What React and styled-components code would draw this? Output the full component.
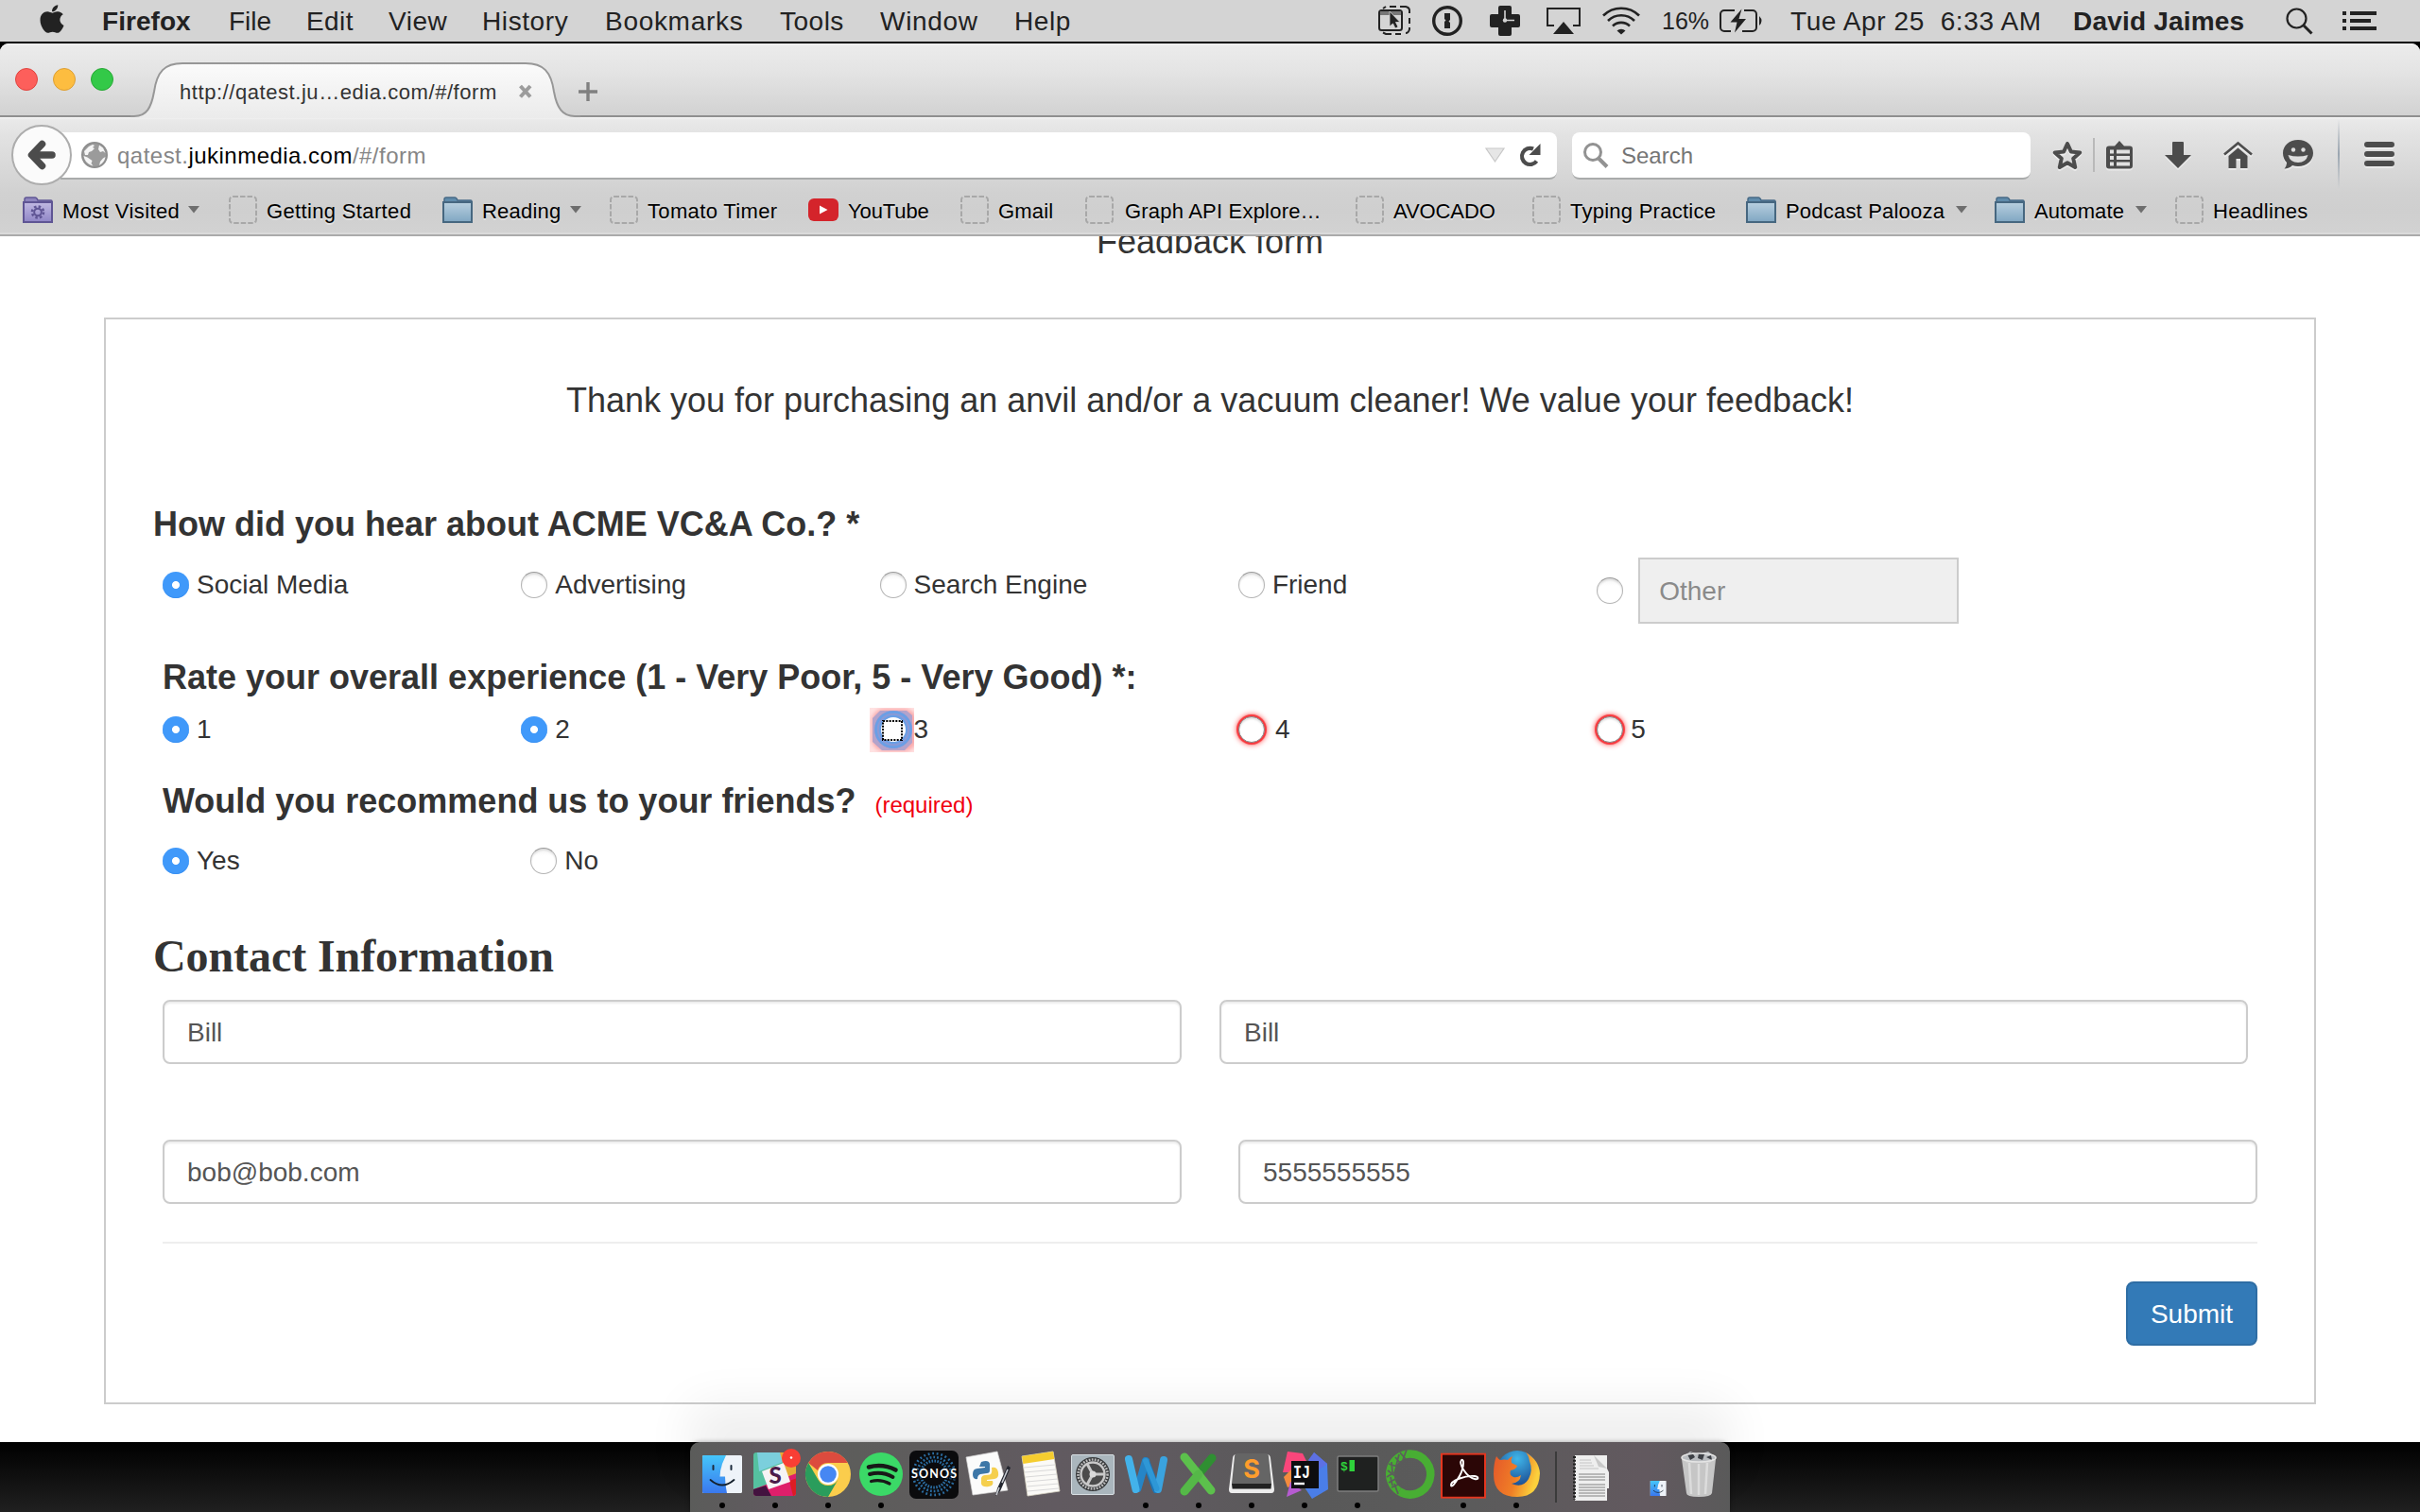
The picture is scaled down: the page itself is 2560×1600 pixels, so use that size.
import React from 'react';
import styled, { createGlobalStyle, css } from 'styled-components';
import { FaApple } from 'react-icons/fa';

const Global = createGlobalStyle`
  * { box-sizing: border-box; }
  html, body { margin: 0; padding: 0; background: #000; overflow: hidden; }
  body { font-family: "Liberation Sans", Arial, Helvetica, sans-serif; }
  h1, h2, h3, p { margin: 0; font-weight: normal; }
  svg { display: block; flex: none; overflow: visible; }
`;

const Desktop = styled.div`
  width: 2560px;
  height: 1600px;
  overflow: hidden;
  display: flex;
  flex-direction: column;
  background: linear-gradient(180deg, #000 0, #000 1526px, #060606 1540px, #202020 1600px);
`;

/* ---------- menu bar ---------- */

const MenuBar = styled.header`
  height: 44px;
  margin-bottom: 2px;
  flex: none;
  display: flex;
  align-items: center;
  background: #d4d4d4;
  color: #222;
  font-size: 28px;
  line-height: 44px;
  white-space: pre;
`;

const AppleSlot = styled.div`
  width: 108px;
  padding-left: 39px;
  svg { width: 32px; height: 34px; margin-top: -5px; }
`;

const MenuItem = styled.span`
  width: ${p => p.$w}px;
  flex: none;
  padding-top: ${p => (p.$size ? 0 : 1)}px;
  letter-spacing: ${p => p.$ls || 0}px;
  font-size: ${p => p.$size || 28}px;
  font-weight: ${p => (p.$bold ? 700 : 400)};
`;

const StatusSlot = styled.div`
  width: ${p => p.$w}px;
  flex: none;
`;

/* ---------- browser window ---------- */

const BrowserWindow = styled.div`
  height: 1480px;
  flex: none;
  display: flex;
  flex-direction: column;
  background: #fff;
  border-radius: 9px 9px 0 0;
  overflow: hidden;
`;

const TabStrip = styled.div`
  height: 78px;
  flex: none;
  display: flex;
  background: linear-gradient(180deg, #f2f2f2 0, #ebebeb 3px, #e4e4e4 30px, #d2d2d2 76px);
  border-bottom: 2px solid #8f8f8f;
`;

const Lights = styled.div`
  display: flex;
  gap: 16px;
  padding: 26px 0 0 16px;
  width: 138px;
`;

const Light = styled.i`
  width: 24px;
  height: 24px;
  border-radius: 50%;
  background: ${p => p.$fill};
  border: 1px solid ${p => p.$edge};
`;

const Tab = styled.div`
  position: relative;
  width: 476px;
  height: 78px;
  padding: 38px 0 0 52px;
  display: flex;
  align-items: flex-start;
  font-size: 22px;
  line-height: 26px;
  color: #333;
  > svg.shape { position: absolute; left: 0; top: 0; }
  > span, > svg.close { position: relative; }
`;

const TabTitle = styled.span`
  width: 358px;
  padding-top: 1px;
  white-space: nowrap;
  letter-spacing: 0.56px;
`;

const CloseSlot = styled.div`
  position: relative;
  margin-top: 5px;
`;

const NewTab = styled.div`
  margin: 41px 0 0 -2px;
`;

const Chrome = styled.div`
  height: 126px;
  flex: none;
  background: linear-gradient(180deg, #f4f4f4 0, #e9e9e9 3px, #e2e2e2 20px, #d1d1d1 80px, #cfcfcf 100px, #d2d2d2 122px);
  border-bottom: 2px solid #ababab;
  box-shadow: inset 0 -2px 0 #dadada;
`;

const NavRow = styled.div`
  height: 74px;
  display: flex;
  align-items: flex-start;
  padding: 8px 0 0 12px;
`;

const BackButton = styled.div`
  width: 64px;
  height: 64px;
  flex: none;
  border-radius: 50%;
  border: 2px solid #adadad;
  background: #fbfbfb;
  z-index: 1;
`;

const Field = styled.div`
  height: 50px;
  flex: none;
  margin-top: 8px;
  display: flex;
  align-items: center;
  background: #fff;
  border-bottom: 2px solid #a9abab;
  font-size: 24px;
`;

const UrlField = styled(Field)`
  width: 1583px;
  margin-left: -12px;
  padding-left: 22px;
  border-radius: 0 8px 8px 0;
`;

const SearchField = styled(Field)`
  width: 485px;
  margin-left: 16px;
  padding-left: 12px;
  gap: 13px;
  border-radius: 8px;
  color: #757575;
  > span { padding-top: 2px; }
`;

const Url = styled.span`
  width: 1447px;
  margin-left: 10px;
  padding-top: 2px;
  color: #868686;
  letter-spacing: 0.48px;
  b { font-weight: 400; color: #000; }
`;

const ReloadSlot = styled.div`
  margin-left: 15px;
`;

const NavIcon = styled.div`
  margin-left: ${p => p.$gap}px;
  margin-top: ${p => p.$top}px;
  flex: none;
  filter: drop-shadow(0 2px 0 rgba(255, 255, 255, 0.45));
`;

const Separator = styled.div`
  width: 2px;
  height: ${p => p.$h}px;
  margin-left: ${p => p.$gap}px;
  margin-top: ${p => p.$top}px;
  flex: none;
  background: ${p => p.$fill};
`;

const BookmarkBar = styled.nav`
  height: 48px;
  padding-left: 24px;
  display: flex;
  align-items: center;
`;

const Bookmark = styled.div`
  width: ${p => p.$w}px;
  flex: none;
  display: flex;
  align-items: center;
  font-size: 22px;
  color: #000;
  white-space: nowrap;
  text-shadow: 0 2px 0 rgba(255, 255, 255, 0.4);
`;

const BookmarkLabel = styled.span`
  margin: 4px 0 0 ${p => p.$gap}px;
  width: ${p => p.$w}px;
  letter-spacing: ${p => p.$ls}px;
`;

/* ---------- page ---------- */

const Page = styled.main`
  flex: 1;
  overflow: hidden;
  display: flex;
  flex-direction: column;
  align-items: center;
  color: #333;
`;

const PageTitle = styled.h1`
  font-size: 36px;
  line-height: 40px;
  margin: -14px 0 60px;
`;

const FormBox = styled.section`
  width: 2340px;
  height: 1150px;
  flex: none;
  border: 2px solid #ccc;
  padding: 61px 0 0 50px;
`;

const Thanks = styled.p`
  width: 2236px;
  font-size: 36px;
  line-height: 50px;
  text-align: center;
`;

const Question = styled.h2`
  display: flex;
  height: 40px;
  font-size: 36px;
  font-weight: 700;
  line-height: 40px;
  margin-top: ${p => p.$top}px;
  padding-left: ${p => (p.$inset ? 10 : 0)}px;
`;

const Required = styled.span`
  margin-left: 20px;
  padding-top: 4px;
  font-size: 24px;
  font-weight: 400;
  color: #f0000f;
`;

const Options = styled.div`
  display: grid;
  grid-template-columns: repeat(5, 379.3px);
  margin-top: ${p => p.$top}px;
  padding-left: 10px;
  height: ${p => p.$h || 28}px;
`;

const Option = styled.label`
  height: 28px;
  margin-top: ${p => p.$top || 0}px;
  margin-left: ${p => p.$shift || 0}px;
  display: flex;
  align-items: center;
  gap: ${p => p.$gap || 8}px;
  font-size: 28px;
  line-height: 28px;
`;

const radioStates = {
  off: css`
    background: linear-gradient(180deg, #f4f4f4, #fff 30%);
    border: 1.5px solid #b4b4b4;
    border-top-color: #999;
    box-shadow: inset 0 2px 2px rgba(0, 0, 0, 0.1);
  `,
  on: css`
    background: radial-gradient(circle at 50% 50%, #fff 0, #fff 3.6px, #4099fa 4.4px);
    box-shadow: inset 0 -1px 0 #3a90f2;
  `,
  invalid: css`
    background: #fff;
    border: 1.5px solid #888;
    box-shadow: 0 0 1px 2px #f7373c, 0 0 5px 3px rgba(255, 60, 60, 0.6), inset 0 2px 2px rgba(0, 0, 0, 0.12);
  `,
};

const Radio = styled.span`
  width: 28px;
  height: 28px;
  flex: none;
  border-radius: 50%;
  ${p => radioStates[p.$state]}
`;

const FocusSlot = styled.span`
  margin: 0 -8px 0 -11px;
  flex: none;
`;

const OtherWrap = styled.div`
  display: flex;
  align-items: center;
  gap: 16px;
`;

const OtherInput = styled.div`
  width: 339px;
  height: 70px;
  flex: none;
  border: 2px solid #ccc;
  background: #efefef;
  color: #8a8a8a;
  font-size: 28px;
  line-height: 67px;
  padding-left: 20px;
`;

const ContactTitle = styled.h2`
  margin-top: 62px;
  letter-spacing: -0.08px;
  font: 700 48px/50px "Liberation Serif", "Times New Roman", serif;
`;

const FieldRow = styled.div`
  display: flex;
  gap: ${p => p.$gap}px;
  margin-top: ${p => p.$top}px;
  padding-left: 10px;
`;

const TextInput = styled.div`
  width: ${p => p.$w || 1078}px;
  height: 68px;
  border: 2px solid #ccc;
  border-radius: 8px;
  box-shadow: inset 0 2px 2px rgba(0, 0, 0, 0.075);
  padding-left: 24px;
  font-size: 28px;
  line-height: 65px;
  color: #555;
`;

const Rule = styled.hr`
  width: 2216px;
  height: 2px;
  border: 0;
  margin: 40px 0 40px 10px;
  background: #eee;
`;

const Submit = styled.div`
  width: 139px;
  height: 68px;
  margin-left: 2087px;
  border: 2px solid #2e6da4;
  border-radius: 8px;
  background: #337ab7;
  color: #fff;
  font-size: 28px;
  line-height: 65px;
  text-align: center;
`;

/* ---------- dock ---------- */

const Dock = styled.footer`
  position: relative;
  width: 1100px;
  height: 74px;
  margin-left: 730px;
  padding-left: 6px;
  flex: none;
  display: flex;
  border-radius: 10px 10px 0 0;
  background: linear-gradient(90deg, #5b5c5a 0, #605a5f 8%, #5d5d5b 16%, #615a60 35%, #5f5a5f 46%, #595959 60%, #5b5b5b 75%, #62595f 92%, #5a5a5a);
  box-shadow: 0 -40px 50px rgba(0, 0, 0, 0.066), 0 0 5px rgba(0, 0, 0, 0.35);
`;

const DockItem = styled.div`
  width: ${p => p.$w || 56}px;
  flex: none;
  display: flex;
  flex-direction: column;
  align-items: center;
  padding-top: 4px;
`;

const RunningDot = styled.i`
  width: 6px;
  height: 6px;
  margin-right: 1px;
  border-radius: 50%;
  background: #000;
`;

const DockDivider = styled.div`
  width: 2px;
  height: 54px;
  margin: 10px 9px 0 13px;
  background: #3b3b3b;
`;

/* ---------- drawings ---------- */

const Ink = '#222';
const Tool = '#4c4c4c';

const CaptureIcon = () => (
  <svg width="36" height="32" fill="none" stroke={Ink} strokeWidth="2">
    <path d="M5 3l3-2M12 1h7M23 1h6q4 1 4 4v3M33 13v6M33 23v2q-1 4-4 4M24 30h-6M14 30H8l-3-1.500" />
    <rect x="1" y="5" width="24" height="21" rx="2.500" fill="#d4d4d4" />
    <path d="M2 8h22" stroke="#777" strokeWidth="4" />
    <path d="M12 6v16l3.500-3 2.500 5 3-1.500-2.500-5h4.500z" fill={Ink} stroke="#d4d4d4" strokeWidth=".8" />
  </svg>
);
const OnePassIcon = () => (
  <svg width="32" height="32">
    <circle cx="16" cy="16" r="14.300" fill="none" stroke={Ink} strokeWidth="3.400" />
    <path d="M13 8h6v7l-1.500 1.500 1.500 1.500v6h-6v-7l1.500-1.500L13 14z" fill={Ink} />
  </svg>
);
const CrossClockIcon = () => (
  <svg width="32" height="32">
    <path d="M11 0h10a2 2 0 0 1 2 2v7h7a2 2 0 0 1 2 2v10a2 2 0 0 1-2 2h-7v7a2 2 0 0 1-2 2H11a2 2 0 0 1-2-2v-7H2a2 2 0 0 1-2-2V11a2 2 0 0 1 2-2h7V2a2 2 0 0 1 2-2z" fill={Ink} />
    <path d="M16 5v10.500h10" fill="none" stroke="#d4d4d4" strokeWidth="1.600" />
    <circle cx="16" cy="15.500" r="2.200" fill="#d4d4d4" />
  </svg>
);
const AirplayIcon = () => (
  <svg width="36" height="28">
    <path d="M8 19H1V1h34v18h-7" fill="none" stroke={Ink} strokeWidth="2" />
    <path d="M18 15l11 13H7z" fill={Ink} />
  </svg>
);
const WifiIcon = () => (
  <svg width="40" height="30" fill="none" stroke={Ink} strokeWidth="2.600">
    <path d="M1 9.500a27 27 0 0 1 38 0M6 15a20 20 0 0 1 28 0M11 20.500a13 13 0 0 1 18 0" />
    <path d="M20 29.500l-4.500-4a6.500 6.500 0 0 1 9 0z" fill={Ink} stroke="none" />
  </svg>
);
const BatteryIcon = () => (
  <svg width="46" height="24">
    <path d="M16 1H5a4 4 0 0 0-4 4v14a4 4 0 0 0 4 4h7M26 1h9a4 4 0 0 1 4 4v14a4 4 0 0 1-4 4H24" fill="none" stroke={Ink} strokeWidth="2" />
    <path d="M42 7q5 5 0 10z" fill={Ink} />
    <path d="M23.500-.5L11.500 13.500h7l-2.500 11 12-14.500h-7.500z" fill={Ink} />
  </svg>
);
const SpotlightIcon = () => (
  <svg width="29" height="29" fill="none" stroke={Ink}>
    <circle cx="11.500" cy="11.500" r="10" strokeWidth="2.200" />
    <path d="M18.500 18.500l9 9" strokeWidth="3" />
  </svg>
);
const ListIcon = () => (
  <svg width="36" height="20" fill={Ink}>
    <path d="M0 0h4v4H0zM0 8h4v4H0zM0 16h4v4H0zM8 0h28v4H8zM8 8h22v4H8zM8 16h28v4H8z" />
  </svg>
);

const TabShape = () => (
  <svg className="shape" width="476" height="78">
    <defs>
      <linearGradient id="tabfill" x1="0" y1="0" x2="0" y2="1">
        <stop offset="0" stopColor="#fbfbfb" />
        <stop offset="1" stopColor="#ebebeb" />
      </linearGradient>
    </defs>
    <path d="M0 78L4 77C17 77 22 68 25 51C28 30 36 21 55 21H418C437 21 445 30 448 51C451 68 457 77 470 77L476 78V79H0z" fill="url(#tabfill)" />
    <path d="M0 77H4C17 77 22 68 25 51C28 30 36 21 55 21H418C437 21 445 30 448 51C451 68 457 77 470 77H476" fill="none" stroke="#979797" strokeWidth="2" />
  </svg>
);
const CloseIcon = () => (
  <svg width="16" height="16">
    <path d="M2.500 2l10.500 11.500M13 2L2.500 13.500" stroke="#9c9c9c" strokeWidth="4" />
  </svg>
);
const PlusIcon = () => (
  <svg width="20" height="20" stroke="#808080" strokeWidth="3.400">
    <path d="M10 0v20M0 10h20" />
  </svg>
);
const BackArrow = () => (
  <svg width="60" height="60">
    <path d="M30.500 18.500L19.500 30l11 11.500M21 30h20" fill="none" stroke={Tool} strokeWidth="7.500" strokeLinecap="round" strokeLinejoin="round" />
  </svg>
);
const Globe = () => (
  <svg width="28" height="28">
    <circle cx="14" cy="14" r="13" fill="#9b9b9b" stroke="#8f8f8f" strokeWidth="2" />
    <path d="M3 10l5-5 4-2 2 1-2 2 2 1-3 3-3 1-1 3-3 0zM2.500 15l4 1.500 5 3.500-1 3 2 2.500-2-.5Q3.500 22 2.500 15zM19 3.500l4 3 2.500 5.500-2.500-2-3 1-2-3zM25.500 16q-1 6-6.500 9l1-4 3-3.500z" fill="#f4f4f4" />
  </svg>
);
const DropTriangle = () => (
  <svg width="21" height="16">
    <path d="M1 1h19L10.500 15z" fill="#e6e6e6" stroke="#c8c8c8" strokeWidth="1.200" />
  </svg>
);
const ReloadIcon = () => (
  <svg width="23" height="24">
    <path d="M18.500 18.500A8.600 8.600 0 1 1 15 5.500" fill="none" stroke={Tool} strokeWidth="4.200" />
    <path d="M22.500 0v12h-12z" fill={Tool} />
  </svg>
);
const SearchIcon = () => (
  <svg width="27" height="28" fill="none" stroke="#929292">
    <circle cx="10" cy="11" r="8.500" strokeWidth="3" />
    <path d="M16 17.500l9 9" strokeWidth="4" />
  </svg>
);
const StarIcon = () => (
  <svg width="32" height="33">
    <path d="M16 4l3.800 8.400 9.400 1-7 6.300 2 9.300-8.200-4.800-8.200 4.800 2-9.300-7-6.300 9.400-1z" fill="none" stroke={Tool} strokeWidth="4" strokeLinejoin="round" />
  </svg>
);
const ClipboardIcon = () => (
  <svg width="28" height="30">
    <path d="M9 5.500L14 0l5 5.500h6a3 3 0 0 1 3 3v18a3 3 0 0 1-3 3H3a3 3 0 0 1-3-3v-18a3 3 0 0 1 3-3z" fill={Tool} />
    <path d="M11 11.500h14M11 18h14M11 24.500h14" stroke="#e0e0e0" strokeWidth="4" />
    <path d="M4 11.500h4M4 18h4M4 24.500h4" stroke="#e0e0e0" strokeWidth="4" />
  </svg>
);
const DownIcon = () => (
  <svg width="28" height="28">
    <path d="M9 0h10a1 1 0 0 1 1 1v13h8L14 28 0 14h8V1a1 1 0 0 1 1-1z" fill={Tool} />
  </svg>
);
const HomeIcon = () => (
  <svg width="31" height="28">
    <path d="M1 13.500L15.500 1.500 30 13.500" fill="none" stroke={Tool} strokeWidth="2.600" />
    <path d="M5.500 15L15.500 6.500 25.500 15v13h-7.500V18h-4.500v10h-8z" fill={Tool} />
  </svg>
);
const SmileIcon = () => (
  <svg width="32" height="31">
    <path d="M16 0c9 0 16 6 16 14s-7 14-16 14c-2 0-4-.3-6-1-2 2-5 3.500-8.500 3.500C3 29 4 26.500 4 24 1.500 21.500 0 18 0 14 0 6 7 0 16 0z" fill={Tool} />
    <circle cx="11" cy="10.500" r="2.200" fill="#ddd" />
    <circle cx="21.500" cy="10.500" r="2.200" fill="#ddd" />
    <path d="M5.500 16q10.500 3 21 0-2 8-10.500 8T5.500 16z" fill="#ddd" />
  </svg>
);
const BurgerIcon = () => (
  <svg width="32" height="26" stroke={Tool} strokeWidth="6" strokeLinecap="round">
    <path d="M3 3h26M3 13h26M3 23h26" />
  </svg>
);

const FolderIcon = ({ smart }) => (
  <svg width="32" height="29">
    <defs>
      <linearGradient id={smart ? 'fs' : 'fp'} x1="0" y1="0" x2="0" y2="1">
        <stop offset="0" stopColor={smart ? '#c0b9e2' : '#b9d0df'} />
        <stop offset="1" stopColor={smart ? '#8f85c6' : '#7fa6c2'} />
      </linearGradient>
    </defs>
    <path d="M2 8V3q0-2 2-2h9q2 0 3 3h14q1 0 1 1v3z" fill={smart ? '#8d84bd' : '#5f8bab'} stroke={smart ? '#5f5594' : '#476a86'} strokeWidth="1.500" />
    <path d="M1 6h30v21H1z" fill={`url(#${smart ? 'fs' : 'fp'})`} stroke={smart ? '#5f5594' : '#466780'} strokeWidth="2" />
    {smart && (
      <g>
        <circle cx="16" cy="16.500" r="6" fill="none" stroke="#5f5594" strokeWidth="2.600" strokeDasharray="2.500 2.200" />
        <circle cx="16" cy="16.500" r="3.800" fill="none" stroke="#5f5594" strokeWidth="2" />
      </g>
    )}
  </svg>
);
const BlankIcon = () => (
  <svg width="30" height="30">
    <rect x="1" y="1" width="28" height="28" rx="3.500" fill="none" stroke="#a8a8a8" strokeWidth="2" strokeDasharray="5.500 2" />
  </svg>
);
const YouTubeIcon = () => (
  <svg width="32" height="24">
    <rect width="32" height="24" rx="6" fill="#d4242b" />
    <path d="M12 7.500l8.500 4.500-8.500 4.500z" fill="#fff" />
  </svg>
);
const MenuArrow = () => (
  <svg width="12" height="8">
    <path d="M0 0h12L6 7.500z" fill="#6e6e6e" />
  </svg>
);

const FocusedRadio = () => (
  <svg width="47" height="47">
    <defs>
      <filter id="soft" x="-20%" y="-20%" width="140%" height="140%"><feGaussianBlur stdDeviation="2.200" /></filter>
      <clipPath id="halo"><rect width="47" height="47" /></clipPath>
    </defs>
    <g clipPath="url(#halo)">
      <rect width="47" height="47" fill="#ffe2e2" />
      <rect x="2" y="1" width="48" height="45" rx="14" fill="#f9a9ab" filter="url(#soft)" />
      <path d="M11 3h28l6 5v29l-8 8H13l-10-9V11z" fill="#b3a3cb" />
    </g>
    <circle cx="25" cy="23" r="20" fill="#8a9ad6" />
    <circle cx="25" cy="23" r="18.500" fill="none" stroke="#6a9fe6" strokeWidth="2.500" />
    <circle cx="25" cy="23" r="14" fill="none" stroke="#6a9fe6" strokeWidth="2.500" />
    <circle cx="25" cy="23" r="13" fill="#fff" />
    <rect x="14" y="14" width="20" height="20" fill="#fff" stroke="#000" strokeWidth="2" strokeDasharray="2 1.330" />
  </svg>
);

/* dock drawings: each lives on a 56 x 60 tile */
const FinderFace = () => (
  <>
    <defs>
      <linearGradient id="fdl" x1="0" y1="0" x2="0" y2="1"><stop offset="0" stopColor="#45c6fa" /><stop offset="1" stopColor="#3a78ee" /></linearGradient>
    </defs>
    <rect x="7" y="10" width="42" height="40" rx="1.500" fill="#eef3f9" />
    <path d="M8.500 10H32q-6 11-6.500 22.500H31q0 9 2 17.500H8.500Q7 50 7 48.500v-37Q7 10 8.500 10z" fill="url(#fdl)" />
    <path d="M18.500 21v4M37.500 21v4" stroke="#1c2b3c" strokeWidth="2" strokeLinecap="round" />
    <path d="M15.500 36q12.500 11 25 0" fill="none" stroke="#14202c" strokeWidth="1.800" strokeLinecap="round" />
  </>
);
const SlackTile = () => (
  <>
    <clipPath id="slk"><rect x="5" y="7" width="45" height="46" rx="3" /></clipPath>
    <g clipPath="url(#slk)">
      <rect x="5" y="7" width="45" height="46" fill="#55c1a0" />
      <path d="M9 7h27l3 9-28 11z" fill="#7bcfdc" />
      <path d="M33 7h18v30l-9 2z" fill="#e5ac35" />
      <path d="M5 46l46-17v24H5z" fill="#df1f6b" />
      <path d="M5 46l13-4 6 11H5z" fill="#43123f" />
      <path d="M43 37l8-3v19h-4z" fill="#dc1d24" />
      <path d="M14 27l23-9 7 20-23 8z" fill="#f6f3f5" />
    </g>
    <text x="28" y="40" fontSize="24" fontWeight="900" fill="#4b1c4a" textAnchor="middle" fontFamily="Lato">S</text>
    <circle cx="45" cy="13" r="10" fill="#f93e34" />
    <circle cx="45" cy="12.500" r="1.300" fill="#fff" />
  </>
);
const ChromeBall = () => (
  <>
    <circle cx="28" cy="30" r="24" fill="#fbcd4c" />
    <path d="M7.200 18A24 24 0 0 1 48.800 18H28a12 12 0 0 0-11 8z" fill="#dc4b3e" />
    <path d="M7.200 18A24 24 0 0 0 28 54l10.400-18A12 12 0 0 1 17.600 36z" fill="#2a9d5c" />
    <circle cx="28" cy="30" r="11" fill="#fff" />
    <circle cx="28" cy="30" r="8.800" fill="#4687f3" />
  </>
);
const SpotifyBall = () => (
  <>
    <circle cx="28" cy="30" r="23" fill="#3bd967" />
    <g fill="none" stroke="#181818" strokeLinecap="round">
      <path d="M15 22.500q15-4 28.500 3" strokeWidth="4.600" />
      <path d="M16 30q13-3.500 24.500 3" strokeWidth="3.900" />
      <path d="M17.500 37.500q10.500-2.500 19.500 2.500" strokeWidth="3.200" />
    </g>
  </>
);
const SonosTile = () => (
  <>
    <rect x="2" y="5" width="52" height="51" rx="7" fill="#0b0b0d" />
    <g fill="none" stroke="#2b6ea3">
      <circle cx="28" cy="30" r="14" strokeWidth="3" strokeDasharray="1.600 1.400" />
      <circle cx="28" cy="30" r="18" strokeWidth="2.600" strokeDasharray="1.800 2" />
      <circle cx="28" cy="30" r="22" strokeWidth="2.600" strokeDasharray="1.800 2.800" />
    </g>
    <rect x="3" y="25" width="50" height="11" fill="#0b0b0d" opacity=".55" />
    <text x="28" y="34.300" fontSize="12.500" fill="#fff" textAnchor="middle" fontFamily="Lato" fontWeight="700" textLength="48">SONOS</text>
  </>
);
const PythonSheet = () => (
  <>
    <path d="M6 12l33-6 11 41-37 5z" fill="#fbfbfb" stroke="#d4d4d4" strokeWidth=".7" />
    <path d="M22 17q8-2.500 9 2v7q0 3-3 3l-7 1q-3 1-3 5-5 1-5-5t5-6l8-1v-1h-6z" fill="#3d77a8" />
    <path d="M33 23q6-1 7 5t-4 7l-8 1v1h6q2 5-4 6-7 1-8-3v-6q1-3 4-3l5-.500q3-1 2-7.500z" fill="#f5cf4e" />
    <path d="M50 21l3 2-11 25-5 5 2-8z" fill="#23262f" />
    <path d="M50 25l-6 14M41 44l-3 8" stroke="#c9ccd2" strokeWidth="1.600" />
  </>
);
const NotesPad = () => (
  <>
    <path d="M9 11l33-5 7 42-34 5z" fill="#fbfaf7" stroke="#d8d4c4" strokeWidth=".8" />
    <path d="M9 11l33-5 1.300 8-33 5z" fill="#f5cd2f" />
    <path d="M11 23l33-3M12 28l33-3M13 33l33-3M14 38l33-3M14.500 43l33-3M15 48l33-3" stroke="#d9d9d9" strokeWidth="1" />
  </>
);
const PrefsTile = () => (
  <>
    <rect x="5.500" y="9.500" width="45" height="42" rx="1.500" fill="#aab6bd" stroke="#d6dde1" />
    <circle cx="28" cy="30" r="18" fill="#36383a" />
    <circle cx="28" cy="30" r="15.500" fill="none" stroke="#bcbcbc" strokeWidth="2.600" strokeDasharray="1.800 1.300" />
    <circle cx="28" cy="30" r="12.500" fill="#4b4b4b" stroke="#c9c9c9" strokeWidth="2.400" />
    <path d="M28 30h12M28 30l-6-11M28 30l-6 11" stroke="#c9c9c9" strokeWidth="3" />
    <circle cx="28" cy="30" r="3.500" fill="#d9d9d9" />
  </>
);
const WordMark = () => (
  <g fill="none" strokeLinecap="round" strokeWidth="8">
    <path d="M28 16l11 30" stroke="#1c76b8" />
    <path d="M47 15l-6 31" stroke="#3aa3df" />
    <path d="M28 16l-8.500 29" stroke="#2585c7" />
    <path d="M10 14l7.500 32" stroke="#43b2ea" />
    <path d="M28 16l11.500 29" stroke="#2e97d6" strokeWidth="6" />
  </g>
);
const ExcelMark = () => (
  <g fill="none" strokeLinecap="round" strokeWidth="9">
    <path d="M42 13L13 48" stroke="#2f8f32" />
    <path d="M13 12l28 35" stroke="#5cc04c" />
    <path d="M28 30L13 48" stroke="#55b848" />
  </g>
);
const SublimeKey = () => (
  <>
    <path d="M4 46L8 13q.4-4 4-4h32q3.600 0 4 4l4 33q0 4-3 4H7q-3 0-3-4z" fill="#ededed" />
    <path d="M7 40L10 11q.3-3 3-3h30q2.700 0 3 3l3 29z" fill="#656565" />
    <path d="M7 40h42l-.5 5.500H7.600z" fill="#222" />
    <text x="28" y="34" fontSize="27" fontWeight="700" fill="#ff9d2c" textAnchor="middle" fontFamily="Inter">S</text>
  </>
);
const IntelliJTile = () => (
  <>
    <path d="M10 6l16 2 6 12-20 8-7 0z" fill="#f9467b" />
    <path d="M38 7l14 12 1 27-17 10-8-12z" fill="#4a7ee8" />
    <path d="M6 33l10-10 2 18-8 3z" fill="#f58b3d" />
    <path d="M9 54l4-16 12 9z" fill="#b65bd1" />
    <path d="M38 7l14 12-12 8-8-12z" fill="#5d70e4" />
    <rect x="14" y="16" width="29" height="29" fill="#0d0d0f" />
    <text x="16" y="34" fontSize="20" fontWeight="700" fill="#fff" fontFamily="Liberation Mono" textLength="18" lengthAdjust="spacingAndGlyphs">IJ</text>
    <path d="M17 40h11" stroke="#fff" strokeWidth="2.400" />
  </>
);
const TerminalTile = () => (
  <>
    <rect x="7" y="11" width="43" height="37" rx="1.500" fill="#1f2120" stroke="#7d7d7d" strokeWidth="1.500" />
    <text x="10" y="26" fontSize="13" fontWeight="700" fill="#2fd23b" fontFamily="Liberation Mono">$</text>
    <rect x="19.500" y="15" width="5.500" height="12" fill="#2fd23b" />
  </>
);
const RingMark = () => (
  <>
    <path d="M28 8.500a21.500 21.500 0 1 1-12 39.500" fill="none" stroke="#48ae33" strokeWidth="8.500" />
    <path d="M16 48A21.500 21.500 0 0 1 28 8.500" fill="none" stroke="#48ae33" strokeWidth="8.500" />
    <path d="M24 4l-4 11M17 7l6 7M12 12l5 6M16 9l-3 12M5 19l9 3M8 17l1 11M4 26l8 6M3 33l8-5M5 39l9-5M7 33l2 9M8 44l7-3M11 40l4 11" fill="none" stroke="#5c5c5c" strokeWidth="1.700" />
  </>
);
const AcrobatTile = () => (
  <>
    <rect x="5" y="6" width="46" height="49" fill="#2b0606" stroke="#e5361f" strokeWidth="2" transform="translate(0 3) scale(1 .94)" />
    <path d="M14 43c-1-5 15-11 25-10 5 1 4 4 0 3-9-2-17-16-14-20 4-2 2 12-4 20-3 5-6 9-7 7z" fill="none" stroke="#fff" strokeWidth="1.900" transform="translate(1 -1)" />
  </>
);
const FirefoxBall = () => (
  <>
    <defs>
      <radialGradient id="ffb" cx=".5" cy=".2" r=".8"><stop offset="0" stopColor="#3fb6ea" /><stop offset="1" stopColor="#14357f" /></radialGradient>
      <linearGradient id="fff" x1="0" y1="0" x2="1" y2=".3"><stop offset="0" stopColor="#e4562a" /><stop offset=".6" stopColor="#f07f26" /><stop offset="1" stopColor="#fbd03c" /></linearGradient>
    </defs>
    <circle cx="29" cy="27" r="22" fill="url(#ffb)" />
    <path d="M7 11q2 3 4 4 4-1 8 0 2-3 5-4-2 4-1 7l6 3q-1 4-7 5-2 5 3 7 4 1 8-2-1 8-10 9 12 5 18-5 5-9 1-19-1-6-4-9 14 8 15 22-1 25-24 25Q4 54 4 30q0-12 3-19z" fill="url(#fff)" />
  </>
);
const PapersTile = () => (
  <>
    <path d="M10 10h34v14l2 4v17h-2v13H10z" fill="#efefef" />
    <path d="M30 10l14 14-9-2z" fill="#c9c9c9" />
    <path d="M15 15h12M15 18h13M15 21h15M15 24h20" stroke="#c4c4c4" strokeWidth="1" />
    <path d="M14 30h28M14 33h28M14 36h28M14 41h28M14 44h28M14 47h28M14 50h28M14 53h28" stroke="#a6a6a6" strokeWidth="1.400" />
    <path d="M9.500 11v46" stroke="#222" strokeWidth="3" strokeDasharray="2 1.800" />
  </>
);
const TrashCan = () => (
  <>
    <path d="M11 12l9-6 9 3 10-3 8 6-6 6H16z" fill="#b9bcc0" />
    <path d="M17 9l5-2 3 5-5 3zM29 8l6 1-2 6-5-2zM37 12l5-2 1 5z" fill="#3c3f45" />
    <path d="M11 14q17 6 36 0l-4 36q-1 4-14 4t-13-4z" fill="#cfcfcf" opacity=".92" />
    <path d="M19 18l2 33M29 19v33M38 18l-2 33" stroke="#e6e6e6" strokeWidth="2.500" opacity=".7" />
    <ellipse cx="29" cy="12.500" rx="18" ry="4.500" fill="none" stroke="#e4e4e4" strokeWidth="1.600" />
  </>
);

const Tile = ({ w = 56, children }) => (
  <svg width={w} height="60">{children}</svg>
);

/* ---------- data ---------- */

const menus = [
  ['Firefox', 134, 0.05, true],
  ['File', 82, 0],
  ['Edit', 87, 0.4],
  ['View', 99, 0.5],
  ['History', 130, 0.6],
  ['Bookmarks', 185, 0.7],
  ['Tools', 106, 0.5],
  ['Window', 142, 0.7],
  ['Help', 385, 0.6],
];

const bookmarks = [
  ['smart', 'Most Visited', 218, 133, 0.4, true],
  ['blank', 'Getting Started', 226, 170, 0.35],
  ['folder', 'Reading', 177, 93, 0.2, true],
  ['blank', 'Tomato Timer', 210, 160, 0.35],
  ['youtube', 'YouTube', 161, 110, -0.1],
  ['blank', 'Gmail', 132, 80, 0.2],
  ['blank', 'Graph API Explore…', 286, 220, 0.2, false, 12],
  ['blank', 'AVOCADO', 187, 120, -0.1],
  ['blank', 'Typing Practice', 226, 170, 0.25],
  ['folder', 'Podcast Palooza', 263, 180, 0.2, true],
  ['folder', 'Automate', 191, 107, 0.1, true],
  ['blank', 'Headlines', 160, 110, 0.3],
];

const bookmarkIcons = {
  smart: <FolderIcon smart />,
  folder: <FolderIcon />,
  blank: <BlankIcon />,
  youtube: <YouTubeIcon />,
};

const dockApps = [
  [FinderFace, true], [SlackTile, true], [ChromeBall, true], [SpotifyBall, true],
  [SonosTile, false], [PythonSheet, false], [NotesPad, false], [PrefsTile, false],
  [WordMark, true], [ExcelMark, true], [SublimeKey, true], [IntelliJTile, true],
  [TerminalTile, true], [RingMark, false], [AcrobatTile, true], [FirefoxBall, true],
];

export default function App() {
  return (
    <Desktop>
      <Global />
      <MenuBar>
        <AppleSlot><FaApple /></AppleSlot>
        {menus.map(([t, w, ls, bold]) => (
          <MenuItem key={t} $w={w} $ls={ls} $bold={bold}>{t}</MenuItem>
        ))}
        <StatusSlot $w={57}><CaptureIcon /></StatusSlot>
        <StatusSlot $w={61}><OnePassIcon /></StatusSlot>
        <StatusSlot $w={60}><CrossClockIcon /></StatusSlot>
        <StatusSlot $w={59}><AirplayIcon /></StatusSlot>
        <StatusSlot $w={63}><WifiIcon /></StatusSlot>
        <MenuItem $w={61} $size={25}>16%</MenuItem>
        <StatusSlot $w={75}><BatteryIcon /></StatusSlot>
        <MenuItem $w={299} $ls={0.6}>Tue Apr 25  6:33 AM</MenuItem>
        <MenuItem $w={225} $ls={0.2} $bold>David Jaimes</MenuItem>
        <StatusSlot $w={60}><SpotlightIcon /></StatusSlot>
        <ListIcon />
      </MenuBar>

      <BrowserWindow>
        <TabStrip>
          <Lights>
            <Light $fill="#fd5f5b" $edge="#e0443f" />
            <Light $fill="#fdbd40" $edge="#dd9f33" />
            <Light $fill="#33c948" $edge="#27a835" />
          </Lights>
          <Tab>
            <TabShape />
            <TabTitle>http://qatest.ju…edia.com/#/form</TabTitle>
            <CloseSlot><CloseIcon /></CloseSlot>
          </Tab>
          <NewTab><PlusIcon /></NewTab>
        </TabStrip>

        <Chrome>
          <NavRow>
            <BackButton><BackArrow /></BackButton>
            <UrlField>
              <Globe />
              <Url>qatest.<b>jukinmedia.com</b>/#/form</Url>
              <DropTriangle />
              <ReloadSlot><ReloadIcon /></ReloadSlot>
            </UrlField>
            <SearchField><SearchIcon /><span>Search</span></SearchField>
            <NavIcon $gap={23} $top={16}><StarIcon /></NavIcon>
            <Separator $gap={11} $top={14} $h={36} $fill="#b9b9b9" />
            <NavIcon $gap={12} $top={17}><ClipboardIcon /></NavIcon>
            <NavIcon $gap={34} $top={18}><DownIcon /></NavIcon>
            <NavIcon $gap={34} $top={18}><HomeIcon /></NavIcon>
            <NavIcon $gap={32} $top={16}><SmileIcon /></NavIcon>
            <Separator $gap={26} $top={-6} $h={74} $fill="linear-gradient(180deg, rgba(150,160,170,0), #9aa5b0 50%, rgba(150,160,170,0))" />
            <NavIcon $gap={26} $top={18}><BurgerIcon /></NavIcon>
          </NavRow>
          <BookmarkBar>
            {bookmarks.map(([kind, t, w, tw, ls, arrow, gap]) => (
              <Bookmark key={t} $w={w}>
                {bookmarkIcons[kind]}
                <BookmarkLabel $w={tw} $gap={gap || 10} $ls={ls}>{t}</BookmarkLabel>
                {arrow && <MenuArrow />}
              </Bookmark>
            ))}
          </BookmarkBar>
        </Chrome>

        <Page>
          <PageTitle>Feadback form</PageTitle>
          <FormBox>
            <Thanks>Thank you for purchasing an anvil and/or a vacuum cleaner! We value your feedback!</Thanks>

            <Question $top={86}>How did you hear about ACME VC&amp;A Co.? *</Question>
            <Options $top={15} $h={70}>
              <Option $top={15}><Radio $state="on" />Social Media</Option>
              <Option $top={15}><Radio $state="off" />Advertising</Option>
              <Option $top={15}><Radio $state="off" />Search Engine</Option>
              <Option $top={15}><Radio $state="off" />Friend</Option>
              <OtherWrap><Radio $state="off" /><OtherInput>Other</OtherInput></OtherWrap>
            </Options>

            <Question $top={37} $inset>Rate your overall experience (1 - Very Poor, 5 - Very Good) *:</Question>
            <Options $top={21}>
              <Option><Radio $state="on" />1</Option>
              <Option><Radio $state="on" />2</Option>
              <Option><FocusSlot><FocusedRadio /></FocusSlot>3</Option>
              <Option $gap={11}><Radio $state="invalid" />4</Option>
              <Option><Radio $state="invalid" />5</Option>
            </Options>

            <Question $top={42} $inset>
              Would you recommend us to your friends?
              <Required>(required)</Required>
            </Question>
            <Options $top={29}>
              <Option><Radio $state="on" />Yes</Option>
              <Option $shift={10}><Radio $state="off" />No</Option>
            </Options>

            <ContactTitle>Contact Information</ContactTitle>
            <FieldRow $top={21} $gap={40}>
              <TextInput>Bill</TextInput>
              <TextInput $w={1088}>Bill</TextInput>
            </FieldRow>
            <FieldRow $top={80} $gap={60}>
              <TextInput>bob@bob.com</TextInput>
              <TextInput>5555555555</TextInput>
            </FieldRow>
            <Rule />
            <Submit>Submit</Submit>
          </FormBox>
        </Page>
      </BrowserWindow>

      <Dock>
        {dockApps.map(([Art, running], i) => (
          <DockItem key={i}>
            <Tile><Art /></Tile>
            {running && <RunningDot />}
          </DockItem>
        ))}
        <DockDivider />
        <DockItem><Tile><PapersTile /></Tile></DockItem>
        <DockItem>
          <Tile><g transform="translate(31 33) scale(.4)"><FinderFace /></g></Tile>
        </DockItem>
        <DockItem><Tile><TrashCan /></Tile></DockItem>
      </Dock>
    </Desktop>
  );
}
